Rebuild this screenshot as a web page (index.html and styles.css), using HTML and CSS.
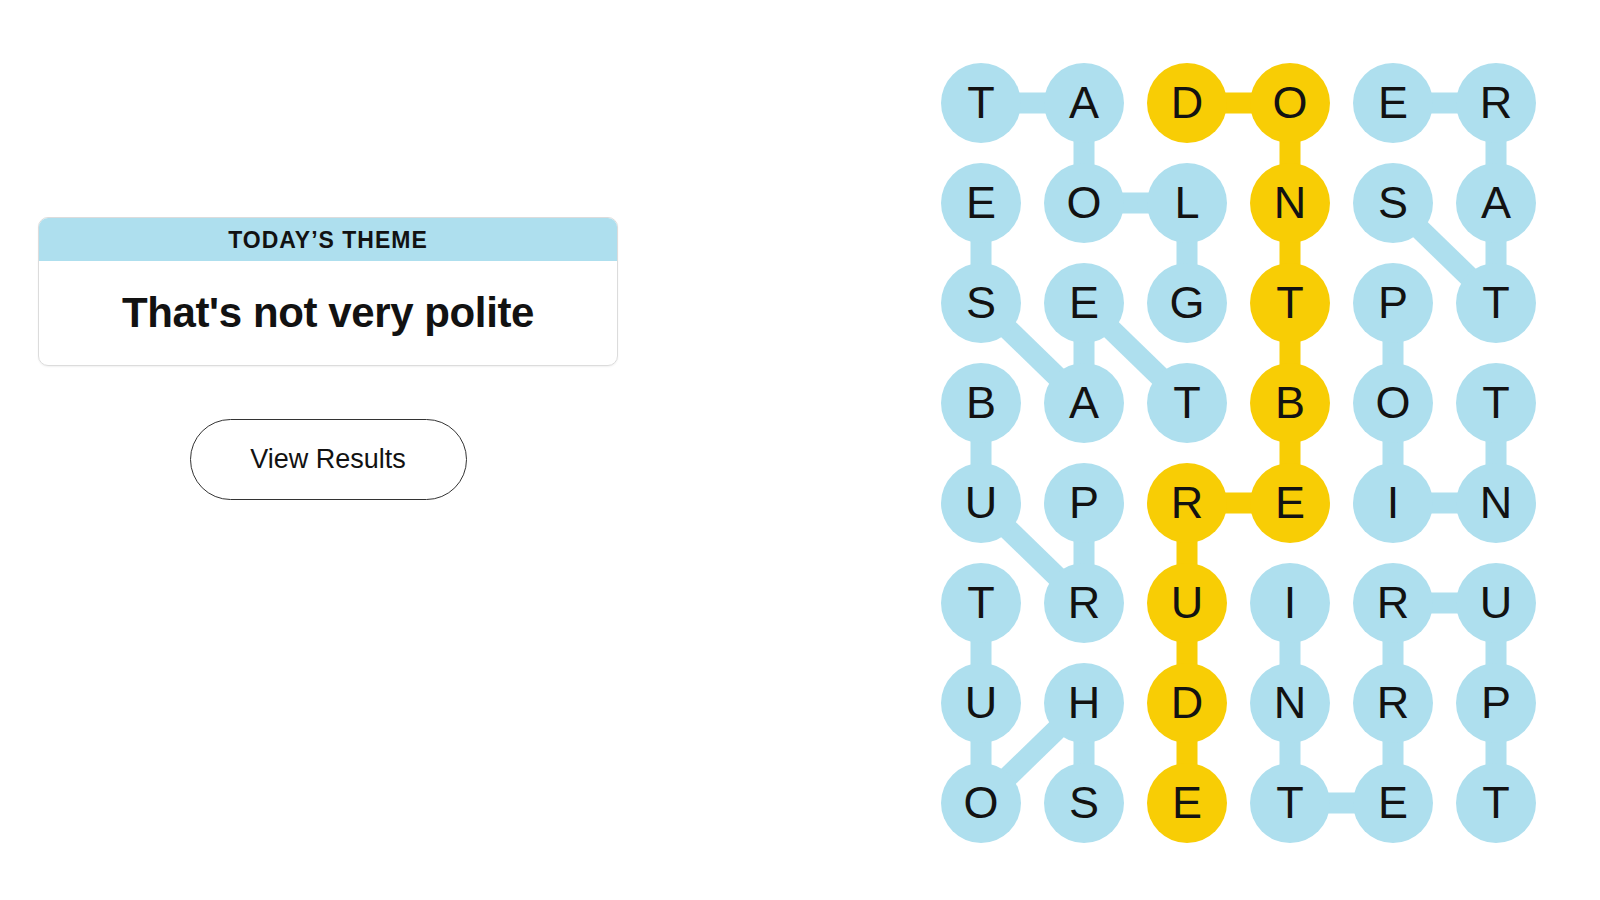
FILE: index.html
```html
<!DOCTYPE html>
<html lang="en">
<head>
<meta charset="utf-8">
<title>Strands</title>
<link rel="stylesheet" href="styles.css">
</head>
<body>
<main class="page">
  <section class="left">
    <div class="theme-card">
      <div class="theme-head">TODAY’S THEME</div>
      <div class="theme-body"><h1 class="theme-title">That's not very polite</h1></div>
    </div>
    <button class="results-btn" type="button">View Results</button>
  </section>

  <section class="board">
    <svg class="links" width="595" height="780" viewBox="0 0 595 780" aria-hidden="true">
      <g stroke="#aedfee" stroke-width="21" stroke-linecap="butt" fill="none">
        <line x1="40" y1="40" x2="143" y2="40"/>
        <line x1="143" y1="40" x2="143" y2="140"/>
        <line x1="143" y1="140" x2="246" y2="140"/>
        <line x1="246" y1="140" x2="246" y2="240"/>
        <line x1="452" y1="40" x2="555" y2="40"/>
        <line x1="555" y1="40" x2="555" y2="140"/>
        <line x1="555" y1="140" x2="555" y2="240"/>
        <line x1="452" y1="140" x2="555" y2="240"/>
        <line x1="40" y1="140" x2="40" y2="240"/>
        <line x1="40" y1="240" x2="143" y2="340"/>
        <line x1="143" y1="240" x2="143" y2="340"/>
        <line x1="143" y1="240" x2="246" y2="340"/>
        <line x1="40" y1="340" x2="40" y2="440"/>
        <line x1="40" y1="440" x2="143" y2="540"/>
        <line x1="143" y1="440" x2="143" y2="540"/>
        <line x1="40" y1="540" x2="40" y2="640"/>
        <line x1="40" y1="640" x2="40" y2="740"/>
        <line x1="143" y1="640" x2="40" y2="740"/>
        <line x1="143" y1="640" x2="143" y2="740"/>
        <line x1="452" y1="240" x2="452" y2="340"/>
        <line x1="452" y1="340" x2="452" y2="440"/>
        <line x1="452" y1="440" x2="555" y2="440"/>
        <line x1="555" y1="340" x2="555" y2="440"/>
        <line x1="349" y1="540" x2="349" y2="640"/>
        <line x1="349" y1="640" x2="349" y2="740"/>
        <line x1="349" y1="740" x2="452" y2="740"/>
        <line x1="452" y1="640" x2="452" y2="740"/>
        <line x1="452" y1="540" x2="452" y2="640"/>
        <line x1="452" y1="540" x2="555" y2="540"/>
        <line x1="555" y1="540" x2="555" y2="640"/>
        <line x1="555" y1="640" x2="555" y2="740"/>
      </g>
      <g stroke="#f8cd05" stroke-width="21" stroke-linecap="butt" fill="none">
        <line x1="246" y1="40" x2="349" y2="40"/>
        <line x1="349" y1="40" x2="349" y2="440"/>
        <line x1="349" y1="440" x2="246" y2="440"/>
        <line x1="246" y1="440" x2="246" y2="740"/>
      </g>
    </svg>
    <div class="grid">
      <span class="cell">T</span><span class="cell">A</span><span class="cell gold">D</span><span class="cell gold">O</span><span class="cell">E</span><span class="cell">R</span>
      <span class="cell">E</span><span class="cell">O</span><span class="cell">L</span><span class="cell gold">N</span><span class="cell">S</span><span class="cell">A</span>
      <span class="cell">S</span><span class="cell">E</span><span class="cell">G</span><span class="cell gold">T</span><span class="cell">P</span><span class="cell">T</span>
      <span class="cell">B</span><span class="cell">A</span><span class="cell">T</span><span class="cell gold">B</span><span class="cell">O</span><span class="cell">T</span>
      <span class="cell">U</span><span class="cell">P</span><span class="cell gold">R</span><span class="cell gold">E</span><span class="cell">I</span><span class="cell">N</span>
      <span class="cell">T</span><span class="cell">R</span><span class="cell gold">U</span><span class="cell">I</span><span class="cell">R</span><span class="cell">U</span>
      <span class="cell">U</span><span class="cell">H</span><span class="cell gold">D</span><span class="cell">N</span><span class="cell">R</span><span class="cell">P</span>
      <span class="cell">O</span><span class="cell">S</span><span class="cell gold">E</span><span class="cell">T</span><span class="cell">E</span><span class="cell">T</span>
    </div>
  </section>
</main>
</body>
</html>
```

FILE: styles.css
```css
* { box-sizing: border-box; }

html, body {
  margin: 0;
  padding: 0;
  background: #ffffff;
  color: #121212;
  font-family: "Liberation Sans", Arial, sans-serif;
}

.page {
  display: flex;
  align-items: flex-start;
  padding-left: 38px;
  width: 1600px;
  height: 900px;
}

.left {
  width: 580px;
  padding-top: 217px;
  display: flex;
  flex-direction: column;
  align-items: center;
}

.theme-card {
  width: 580px;
  border: 1px solid #dcdcdc;
  border-radius: 10px;
  overflow: hidden;
  box-shadow: 0 1px 2px rgba(0,0,0,0.06);
}

.theme-head {
  height: 43px;
  background: #aedfee;
  display: flex;
  align-items: center;
  justify-content: center;
  font-family: "Liberation Sans", sans-serif;
  font-weight: 700;
  font-size: 23px;
  letter-spacing: 1px;
  color: #121212;
  padding-top: 2px;
}

.theme-body {
  height: 104px;
  display: flex;
  align-items: center;
  justify-content: center;
}

.theme-title {
  margin: 0;
  font-family: "Liberation Sans", sans-serif;
  font-weight: 700;
  font-size: 42px;
  color: #121212;
  letter-spacing: -0.4px;
}

.results-btn {
  margin-top: 53px;
  width: 277px;
  height: 81px;
  border: 1.5px solid #333333;
  border-radius: 41px;
  background: #ffffff;
  font-family: "Liberation Sans", Arial, sans-serif;
  font-size: 27px;
  color: #121212;
  padding: 0;
}

.board {
  position: relative;
  margin-left: 323px;
  margin-top: 63px;
  width: 595px;
  height: 780px;
}

.links {
  position: absolute;
  left: 0;
  top: 0;
}

.grid {
  position: relative;
  display: grid;
  grid-template-columns: repeat(6, 80px);
  grid-auto-rows: 80px;
  column-gap: 23px;
  row-gap: 20px;
}

.cell {
  width: 80px;
  height: 80px;
  border-radius: 50%;
  background: #aedfee;
  display: flex;
  align-items: center;
  justify-content: center;
  font-family: "Liberation Sans", Arial, sans-serif;
  font-size: 45px;
  color: #121212;
  line-height: 1;
  padding-bottom: 2px;
}

.cell.gold {
  background: #f8cd05;
}
```
